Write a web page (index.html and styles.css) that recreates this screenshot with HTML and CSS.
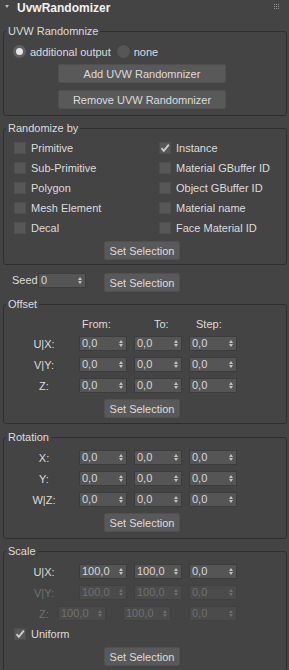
FILE: index.html
```html
<!DOCTYPE html>
<html lang="en">
<head>
    <meta charset="UTF-8">
    <meta name="viewport" content="width=device-width, initial-scale=1.0">
    <title>UvwRandomizer</title>
    <link rel="stylesheet" href="styles.css">
</head>
<body>
    <div class="rollout-head">
        <span class="caret"></span>
        <span class="rollout-title">UvwRandomizer</span>
        <span class="grip"><i></i><i></i><i></i><i></i><i></i><i></i><i></i><i></i><i></i></span>
    </div>

    <fieldset class="group g-uvw">
        <legend>UVW Randomnize</legend>
        <div class="radios">
            <label class="radio"><span class="dot on"></span>additional output</label>
            <label class="radio"><span class="dot"></span>none</label>
        </div>
        <button class="btn wide">Add UVW Randomnizer</button>
        <button class="btn wide second">Remove UVW Randomnizer</button>
    </fieldset>

    <fieldset class="group g-rand">
        <legend>Randomize by</legend>
        <div class="checks">
            <label class="check"><span class="box"></span>Primitive</label>
            <label class="check"><span class="box"><svg width="12" height="12" viewBox="0 0 12 12"><path d="M2.5 6.2 L4.8 8.8 L9.8 2.6" fill="none" stroke="#cfcfcf" stroke-width="1.8"/></svg></span>Instance</label>
            <label class="check"><span class="box"></span>Sub-Primitive</label>
            <label class="check"><span class="box"></span>Material GBuffer ID</label>
            <label class="check"><span class="box"></span>Polygon</label>
            <label class="check"><span class="box"></span>Object GBuffer ID</label>
            <label class="check"><span class="box"></span>Mesh Element</label>
            <label class="check"><span class="box"></span>Material name</label>
            <label class="check"><span class="box"></span>Decal</label>
            <label class="check"><span class="box"></span>Face Material ID</label>
        </div>
        <button class="btn small">Set Selection</button>
    </fieldset>

    <div class="seed-row">
        <span class="seed-label">Seed</span>
        <div class="spin seed"><span>0</span><span class="arr"></span></div>
        <button class="btn small">Set Selection</button>
    </div>

    <fieldset class="group g-offset">
        <legend>Offset</legend>
        <div class="col-heads">
            <span class="h-from">From:</span>
            <span class="h-to">To:</span>
            <span>Step:</span>
        </div>
        <div class="spin-row first">
            <span class="axis">U|X:</span>
            <div class="spin"><span>0,0</span><span class="arr"></span></div>
            <div class="spin"><span>0,0</span><span class="arr"></span></div>
            <div class="spin"><span>0,0</span><span class="arr"></span></div>
        </div>
        <div class="spin-row">
            <span class="axis">V|Y:</span>
            <div class="spin"><span>0,0</span><span class="arr"></span></div>
            <div class="spin"><span>0,0</span><span class="arr"></span></div>
            <div class="spin"><span>0,0</span><span class="arr"></span></div>
        </div>
        <div class="spin-row">
            <span class="axis">Z:</span>
            <div class="spin"><span>0,0</span><span class="arr"></span></div>
            <div class="spin"><span>0,0</span><span class="arr"></span></div>
            <div class="spin"><span>0,0</span><span class="arr"></span></div>
        </div>
        <button class="btn small">Set Selection</button>
    </fieldset>

    <fieldset class="group g-rot">
        <legend>Rotation</legend>
        <div class="spin-row first">
            <span class="axis">X:</span>
            <div class="spin"><span>0,0</span><span class="arr"></span></div>
            <div class="spin"><span>0,0</span><span class="arr"></span></div>
            <div class="spin"><span>0,0</span><span class="arr"></span></div>
        </div>
        <div class="spin-row">
            <span class="axis">Y:</span>
            <div class="spin"><span>0,0</span><span class="arr"></span></div>
            <div class="spin"><span>0,0</span><span class="arr"></span></div>
            <div class="spin"><span>0,0</span><span class="arr"></span></div>
        </div>
        <div class="spin-row">
            <span class="axis">W|Z:</span>
            <div class="spin"><span>0,0</span><span class="arr"></span></div>
            <div class="spin"><span>0,0</span><span class="arr"></span></div>
            <div class="spin"><span>0,0</span><span class="arr"></span></div>
        </div>
        <button class="btn small">Set Selection</button>
    </fieldset>

    <fieldset class="group g-scale">
        <legend>Scale</legend>
        <div class="spin-row first">
            <span class="axis">U|X:</span>
            <div class="spin"><span>100,0</span><span class="arr"></span></div>
            <div class="spin"><span>100,0</span><span class="arr"></span></div>
            <div class="spin"><span>0,0</span><span class="arr"></span></div>
        </div>
        <div class="spin-row off">
            <span class="axis">V|Y:</span>
            <div class="spin"><span>100,0</span><span class="arr"></span></div>
            <div class="spin"><span>100,0</span><span class="arr"></span></div>
            <div class="spin"><span>0,0</span><span class="arr"></span></div>
        </div>
        <div class="spin-row off loose">
            <span class="axis">Z:</span>
            <div class="spin"><span>100,0</span><span class="arr"></span></div>
            <div class="spin"><span>100,0</span><span class="arr"></span></div>
            <div class="spin"><span>0,0</span><span class="arr"></span></div>
        </div>
        <label class="check uniform"><span class="box"><svg width="12" height="12" viewBox="0 0 12 12"><path d="M2.5 6.2 L4.8 8.8 L9.8 2.6" fill="none" stroke="#cfcfcf" stroke-width="1.8"/></svg></span>Uniform</label>
        <button class="btn small">Set Selection</button>
    </fieldset>
</body>
</html>
```

FILE: styles.css
```css
body {
    margin: 0;
    width: 289px;
    height: 670px;
    overflow: hidden;
    background: #444;
    color: #dcdcdc;
    font-family: "Liberation Sans", Arial, sans-serif;
    font-size: 11px;
}

/* rollout header */
.rollout-head {
    display: flex;
    align-items: flex-start;
    height: 16px;
    line-height: 16px;
    padding-left: 5px;
}
.caret {
    width: 0;
    height: 0;
    margin: 5px 8px 0 0;
    border-left: 2.5px solid transparent;
    border-right: 2.5px solid transparent;
    border-top: 3px solid #b8b8b8;
}
.rollout-title {
    font-size: 12px;
    font-weight: bold;
    color: #f2f2f2;
}
.grip {
    margin: 4px 10px 0 auto;
    display: grid;
    grid-template-columns: repeat(3, 1px);
    grid-auto-rows: 1px;
    gap: 1px;
}
.grip i {
    background: #929292;
}

/* group boxes */
.group {
    margin: 6px 2px 0 3px;
    padding: 0 6px 5px 0;
    border: 1px solid #2e2e2e;
    border-radius: 3px;
    min-width: 0;
}
.group legend {
    margin-left: 2px;
    padding: 0 2px;
    line-height: 13px;
}
.g-uvw { margin-top: 9px; padding-bottom: 6px; }
.g-rand { padding-bottom: 4px; }
.g-offset { padding-bottom: 5px; }
.g-rot { margin-top: 7px; padding-bottom: 6px; }

/* buttons */
.btn {
    display: block;
    height: 19px;
    margin: 6px auto 0;
    padding: 0;
    background: #595959;
    border: 1px solid #505050;
    border-radius: 2px;
    color: #dcdcdc;
    font-family: "Liberation Sans", Arial, sans-serif;
    font-size: 11px;
}
.btn.wide { width: 168px; }
.btn.wide.second { margin-top: 7px; }
.btn.small { width: 76px; }

/* radios */
.radios {
    display: flex;
    align-items: center;
    height: 13px;
    margin: 7px 0 0 9px;
}
.radio {
    display: flex;
    align-items: center;
}
.radio + .radio {
    margin-left: 6px;
}
.dot {
    width: 13px;
    height: 13px;
    margin-right: 4px;
    border-radius: 50%;
    background: #565656;
    box-sizing: border-box;
}
.dot.on {
    background: #e6e6e6;
    border: 3px solid #606060;
}

/* checkboxes */
.checks {
    display: grid;
    grid-template-columns: 145px auto;
    grid-auto-rows: 20px;
    margin: 3px 0 0 10px;
}
.check {
    display: flex;
    align-items: center;
}
.box {
    width: 12px;
    height: 12px;
    margin-right: 5px;
    background: #575757;
    box-shadow: inset 0 0 0 1px #4e4e4e;
}
.box svg {
    display: block;
}
.g-rand .btn.small { margin-top: 3px; }
.uniform {
    height: 20px;
    margin: 3px 0 0 10px;
}
.g-scale .btn.small { margin-top: 3px; }

/* seed */
.seed-row {
    display: flex;
    align-items: flex-start;
    margin-top: 8px;
    padding-left: 12px;
}
.seed-label {
    width: 26px;
    line-height: 15px;
}
.seed-row .btn.small {
    margin: 0 0 0 18px;
}

/* spinners */
.spin {
    box-sizing: border-box;
    width: 48px;
    height: 15px;
    padding: 0 3px 0 2px;
    display: flex;
    align-items: center;
    justify-content: space-between;
    background: #555;
    border: 1px solid #3c3c3c;
    color: #d8d8d8;
    line-height: 13px;
}
.arr {
    display: flex;
    flex-direction: column;
    gap: 1px;
}
.arr::before,
.arr::after {
    content: "";
    width: 0;
    height: 0;
    border-left: 2px solid transparent;
    border-right: 2px solid transparent;
}
.arr::before { border-bottom: 3px solid #c4c4c4; }
.arr::after { border-top: 3px solid #c4c4c4; }

.col-heads {
    display: flex;
    margin: 7px 0 0 78px;
    line-height: 13px;
}
.h-from { width: 72px; }
.h-to { width: 42px; }

.spin-row {
    display: flex;
    align-items: center;
    height: 15px;
    margin-top: 6px;
}
.g-offset .spin-row.first { margin-top: 5px; }
.axis {
    width: 28px;
    margin: 0 21px 0 26px;
    text-align: center;
}
.spin-row .spin + .spin {
    margin-left: 7px;
}
.spin-row.off .axis { color: #727272; }
.spin-row.off .spin {
    background: #4b4b4b;
    border-color: #414141;
    color: #707070;
}
.spin-row.off .arr::before { border-bottom-color: #6e6e6e; }
.spin-row.off .arr::after { border-top-color: #6e6e6e; }
.spin-row.loose .axis { margin-right: 0; }
.spin-row.loose .spin + .spin { margin-left: 17px; }
.spin-row.loose .spin:last-child { margin-left: 18px; }
```
